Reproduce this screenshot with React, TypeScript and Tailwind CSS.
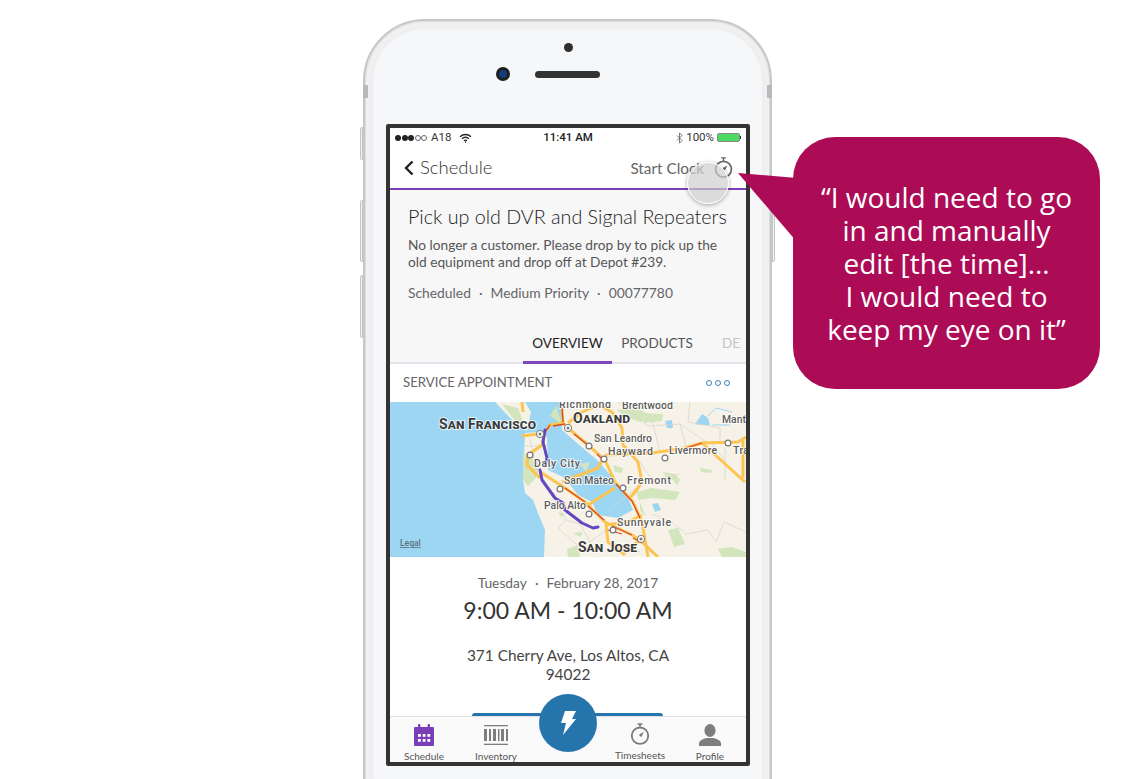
const Stopwatch = ({ className, needle = "#7a7a7a" }: { className?: string; needle?: string }) => (
  <svg viewBox="0 0 24 28" className={className} fill="none" stroke={needle}>
    <path d="M9 1.2h6M12 1.2v4" strokeWidth="1.8" />
    <circle cx="12" cy="15.5" r="10" strokeWidth="2.2" />
    <path d="M16.8 10.8l-3.2 6.600-3-3z" fill={needle} stroke="none" />
  </svg>
)

function StatusBar() {
  return (
    <div className="h-[19px] grid grid-cols-[1fr_auto_1fr] items-center px-[5px] text-[11.5px] text-[#333] font-['Roboto',sans-serif]">
      <div className="flex items-center">
        <span className="w-[6px] h-[6px] rounded-full bg-[#222] mr-[0.5px]" />
        <span className="w-[6px] h-[6px] rounded-full bg-[#222] mr-[0.5px]" />
        <span className="w-[6px] h-[6px] rounded-full bg-[#222] mr-[0.5px]" />
        <span className="w-[6px] h-[6px] rounded-full border border-[#666] mr-[0.5px]" />
        <span className="w-[6px] h-[6px] rounded-full border border-[#666] mr-[4px]" />
        <span>A18</span>
        <svg viewBox="0 0 14 11" className="w-[13px] h-[10px] ml-[8px]" fill="none" stroke="#222" strokeWidth="1.5">
          <path d="M1 4a9 9 0 0 1 12 0M3.200 6.300a6 6 0 0 1 7.600 0M5.300 8.400a3 3 0 0 1 3.400 0" />
          <circle cx="7" cy="10" r=".8" fill="#222" stroke="none" />
        </svg>
      </div>
      <span className="font-medium text-[#222]">11:41 AM</span>
      <div className="flex items-center justify-end">
        <svg viewBox="0 0 8 14" className="w-[7px] h-[12px] mr-[3px]" fill="none" stroke="#666" strokeWidth="1">
          <path d="M1 4l6 6-3 3V1l3 3-6 6" />
        </svg>
        <span>100%</span>
        <span className="ml-[3px] w-[23px] h-[9px] bg-[#4cd964] border border-[#888] rounded-[2px]" />
        <span className="w-px h-[3px] bg-[#333]" />
      </div>
    </div>
  )
}

const MAP_LABELS: [string, number, number, number][] = [
  ["Richmond", 169, 6, 52],
  ["Brentwood", 232, 7, 51],
  ["Mant", 332, 21, 24],
  ["San Leandro", 204, 40, 58],
  ["Hayward", 218, 53, 45],
  ["Livermore", 279, 52, 48],
  ["Tra", 343, 52, 16],
  ["Daly City", 144, 65, 46],
  ["San Mateo", 174, 82, 50],
  ["Fremont", 237, 82, 44],
  ["Palo Alto", 154, 107, 42],
  ["Sunnyvale", 227, 124, 54],
]

const CITY_LABELS: [string, number, number, number][] = [
  ["San Francisco", 49, 27, 97],
  ["Oakland", 183, 21, 57],
  ["San Jose", 188, 150, 59],
]

function MapView() {
  const minor = [
    "M135 44H157M140 36L146 66M133 68L150 58M160 90L176 118L190 122L205 150M176 118L168 126L195 150",
    "M228 0L258 24L290 22L316 40M290 22L296 45M262 18L270 50M300 0L298 20L330 26M330 26V40",
    "M262 112L282 120L296 132L318 128L326 140L334 120L356 130M220 108L248 84M216 128L200 140M225 142L250 150",
    "M335 46V78M322 42L336 60M250 60L262 78L290 72",
  ]
  const roads = [
    "M132 0L133 10M155 30L160 23L173 21L178 26L198 43L215 58L225 80L243 100L252 120L258 155",
    "M172 5L173 21M178 21L192 10L208 3M208 3L222 10L232 26L233 43L248 60L252 80L244 92",
    "M215 53L262 51L295 46L312 41L348 40L356 35M312 41L355 80M353 36V76",
    "M172 80L208 66L212 58M198 103L225 86M240 96L248 86",
    "M150 70L155 73L175 86L195 100L215 120L242 133L252 140L268 155",
    "M138 53L137 63L150 76M138 53L152 43L155 30M132 34L148 32",
    "M215 123L238 120L252 113M216 122L218 140L235 153M250 138L235 150",
  ]
  const reds = [
    "M155 30L160 23M172 6L173 20M163 24L175 22M184 32L198 43M207 52L215 60M226 82L242 99L250 116",
    "M175 86L195 100M198 104L214 118M222 124L242 133M296 46L312 41M218 128L232 132M243 136L252 141",
  ]
  return (
    <svg viewBox="0 0 356 155" className="w-[356px] h-[155px] block shrink-0">
      <rect width="356" height="155" fill="#f6f2e8" />
      <path d="M0 0H172L172 28L187 41L207 58L225 78L238 96L243 108L228 116L208 113L202 100L188 93L175 76L158 68L157 35L150 30L135 31L133 78L135 91L143 98L148 111L155 128L154 155H0Z" fill="#9dd6f2" />
      <path d="M105 0H135L141 10L137 29L128 24Z" fill="#f6f2e8" />
      <path d="M112 2L128 6L135 25L126 20Z M226 8L246 5L260 14L250 20L238 16Z" fill="#d3e5bd" />
      <path d="M133 50L150 62L146 76L138 84L133 78Z M160 14L172 22L166 4Z M223 63L233 66L232 71L225 70Z M247 11L273 12L272 19L255 21Z M310 66L322 68L321 71L311 70Z M273 70L285 72L290 78H278Z M247 90L262 86L290 90L285 98L262 96L248 98Z M283 78H290L287 83Z M278 128L288 126L295 142L284 145Z M328 147L342 145L356 150V155H332Z M168 110L175 112L171 115Z M183 131L193 130L190 135Z M177 147L188 143L190 155H178Z M250 100L256 115L250 108Z M190 62L200 60L196 70Z" fill="#d3e5bd" />
      <path d="M275 19L282 18L283 26L277 26Z M305 22L312 12L318 16L320 23H310Z M262 102L268 101L271 108L265 110Z" fill="#9dd6f2" />
      <path d="M318 14L326 6L342 10M322 23H340" fill="none" stroke="#9dd6f2" strokeWidth="1" />
      <g fill="none" stroke="#d9d5c9" strokeWidth=".8">
        {minor.map((d) => <path key={d} d={d} />)}
      </g>
      <g fill="none" stroke="#fcc551" strokeWidth="3" strokeLinejoin="round">
        {roads.map((d) => <path key={d} d={d} />)}
      </g>
      <g fill="none" stroke="#d9472b" strokeWidth="1.300">
        {reds.map((d) => <path key={d} d={d} />)}
      </g>
      <path d="M155 28L153 40L157 56L155 64M150 68L152 78L165 96L173 101L175 108L192 121L203 126L208 125" fill="none" stroke="#6248c0" strokeWidth="3" strokeLinecap="round" strokeLinejoin="round" />
      <g fill="#fff" stroke="#777" strokeWidth="1.200">
        {[[140, 53], [199, 44], [214, 57], [275, 56], [338, 41], [170, 87], [233, 86], [199, 112], [223, 128]].map(([x, y]) => (
          <circle key={`${x}-${y}`} cx={x} cy={y} r="2.900" />
        ))}
      </g>
      <g fill="#fff" stroke="#777" strokeWidth="1">
        {[[150, 32], [178, 26], [251, 137]].map(([x, y]) => (
          <g key={x}>
            <circle cx={x} cy={y} r="3.600" />
            <circle cx={x} cy={y} r="1.500" fill="#777" stroke="none" />
          </g>
        ))}
      </g>
      <g fontFamily="Roboto, sans-serif" stroke="#fff" strokeOpacity=".75" strokeWidth="2" paintOrder="stroke" fill="#5c5c5c" fontSize="10.5" fontWeight="500">
        {MAP_LABELS.map(([t, x, y, w]) => (
          <text key={t} x={x} y={y} textLength={w}>{t}</text>
        ))}
        {CITY_LABELS.map(([t, x, y, w]) => (
          <text key={t} x={x} y={y} textLength={w} fontWeight="700" fontSize="14" fontVariant="small-caps" fill="#3c3c3c">{t}</text>
        ))}
      </g>
      <text x="10" y="144" fontFamily="Roboto, sans-serif" fontSize="8.500" fontWeight="500" fill="#5a7480" textDecoration="underline">Legal</text>
    </svg>
  )
}

function TabBar() {
  return (
    <div className="h-[46px] shrink-0 bg-[#fafafa] border-t border-[#e2e2e4] flex relative text-[10px] leading-[12px] text-[#555] font-['Lato',sans-serif]">
      <div className="w-[68px] flex flex-col items-center pt-[7px]">
        <svg viewBox="0 0 20 22" className="w-[20px] h-[22px]">
          <path d="M1 3h18a1 1 0 0 1 1 1v17a1 1 0 0 1-1 1H1a1 1 0 0 1-1-1V4a1 1 0 0 1 1-1z" fill="#7a3fb8" />
          <rect x="4" y="0" width="2.400" height="5" rx="1" fill="#7a3fb8" />
          <rect x="13.600" y="0" width="2.400" height="5" rx="1" fill="#7a3fb8" />
          <g fill="#fff">
            {[4, 8.700, 13.400].flatMap((x) => [10, 15].map((y) => <rect key={`${x}${y}`} x={x} y={y} width="2.800" height="2.800" />))}
          </g>
        </svg>
        <span className="mt-[4px]">Schedule</span>
      </div>
      <div className="w-[76px] flex flex-col items-center pt-[8px]">
        <svg viewBox="0 0 24 20" className="w-[24px] h-[20px]" fill="#7d7d7d">
          <rect width="24" height="1.300" />
          <rect y="18.700" width="24" height="1.300" />
          <rect x="0" y="4" width="3" height="12" />
          <rect x="5" y="4" width="2" height="12" />
          <rect x="9" y="4" width="3" height="12" />
          <rect x="14" y="4" width="1.500" height="12" />
          <rect x="17" y="4" width="3" height="12" />
          <rect x="22" y="4" width="2" height="12" />
        </svg>
        <span className="mt-[5px]">Inventory</span>
      </div>
      <div className="w-[68px]" />
      <div className="w-[76px] flex flex-col items-center pt-[6px]">
        <Stopwatch className="w-[20px] h-[23px]" />
        <span className="mt-[3px]">Timesheets</span>
      </div>
      <div className="w-[64px] flex flex-col items-center pt-[7px]">
        <svg viewBox="0 0 22 22" className="w-[22px] h-[22px]" fill="#7d7d7d">
          <ellipse cx="11" cy="6.500" rx="5.600" ry="6.500" />
          <path d="M0 22v-2.500c0-3 4-4.500 7.500-5.500h7c3.500 1 7.500 2.500 7.500 5.500V22z" />
        </svg>
        <span className="mt-[4px]">Profile</span>
      </div>
      <div className="absolute left-[149px] top-[-23px] w-[58px] h-[58px] rounded-full bg-[#2574ab] flex items-center justify-center">
        <svg viewBox="0 0 16 24" className="w-[16px] h-[24px]" fill="#fff">
          <path d="M5 0h11l-4 8h4L3 24l3-12H1z" />
        </svg>
      </div>
    </div>
  )
}

function Screen() {
  return (
    <div className="w-[364px] h-[642px] ml-[21px] border-4 border-[#333] rounded-[2px] bg-white flex flex-col overflow-hidden">
      <div className="bg-white shrink-0"><StatusBar /></div>
      <div className="h-[43px] shrink-0 bg-white border-b-2 border-[#7b3fb5] flex items-center justify-between pl-[14px] pr-[13px] font-['Lato',sans-serif] text-[#4a4a4a]">
        <div className="flex items-center">
          <svg viewBox="0 0 10 16" className="w-[10px] h-[16px]" fill="none" stroke="#222" strokeWidth="2.400">
            <path d="M8.500 1.500L2 8l6.500 6.500" />
          </svg>
          <span className="text-[18.5px] ml-[6px] pt-px font-light text-[#333]">Schedule</span>
        </div>
        <div className="flex items-center text-[15.3px] text-[#666]">
          <span className="pt-[2px]">Start Clock</span>
          <Stopwatch className="w-[19px] h-[24px] ml-[10px] mt-[1px]" needle="#666" />
        </div>
      </div>
      <div className="h-[174px] shrink-0 bg-[#f7f7f8] border-b-2 border-[#e4e2ea] flex flex-col font-['Lato',sans-serif]">
        <h1 className="text-[19.7px] leading-[24px] font-light text-[#222] pl-[18px] pt-[15px] whitespace-nowrap">Pick up old DVR and Signal Repeaters</h1>
        <p className="text-[13.700px] leading-[17px] text-[#555] pl-[18px] pt-[7px]">No longer a customer. Please drop by to pick up the<br />old equipment and drop off at Depot #239.</p>
        <div className="text-[13.850px] text-[#666] pl-[18px] pt-[14px] leading-[17px] flex gap-[8px]">
          <span>Scheduled</span><span>·</span><span>Medium Priority</span><span>·</span><span>00077780</span>
        </div>
        <div className="mt-auto flex pl-[133px] text-[13.500px] leading-[17px]">
          <div className="w-[89px] h-[37px] pt-[8px] text-center text-[#222] border-b-[3px] border-[#7e48bd] -mb-[2px]">OVERVIEW</div>
          <div className="w-[90px] pt-[8px] text-center text-[#555]">PRODUCTS</div>
          <div className="pt-[8px] ml-[20px] text-[#c4c4c4] w-[19px] overflow-hidden whitespace-nowrap">DETAILS</div>
        </div>
      </div>
      <div className="h-[38px] shrink-0 bg-white flex items-center justify-between pl-[13px] pr-[16px] text-[13.200px] text-[#666] font-['Lato',sans-serif]">
        <span>SERVICE APPOINTMENT</span>
        <div className="flex gap-[3px]">
          <span className="w-[6px] h-[6px] rounded-full border border-[#3f83b5]" />
          <span className="w-[6px] h-[6px] rounded-full border border-[#3f83b5]" />
          <span className="w-[6px] h-[6px] rounded-full border border-[#3f83b5]" />
        </div>
      </div>
      <MapView />
      <div className="flex-1 min-h-0 bg-white flex flex-col items-center font-['Lato',sans-serif] relative overflow-hidden">
        <div className="flex gap-[8px] text-[13.800px] leading-[17px] text-[#666] pt-[17px]">
          <span>Tuesday</span><span>·</span><span>February 28, 2017</span>
        </div>
        <div className="text-[23px] leading-[30px] text-[#333] mt-[4px]">9:00 AM - 10:00 AM</div>
        <div className="text-[15.400px] leading-[19px] text-[#444] text-center mt-[21px]">371 Cherry Ave, Los Altos, CA<br />94022</div>
        <div className="absolute left-[82px] bottom-0 w-[191px] h-[3px] rounded-t-[8px] bg-[#2574ab]" />
      </div>
      <TabBar />
    </div>
  )
}

export default function App() {
  return (
    <div className="w-[1136px] h-[779px] bg-white relative overflow-hidden">
      <div className="pt-[19px] pl-[363px]">
        <div className="w-[409px] h-[820px] rounded-[62px] bg-[#f6f7f9] border-2 border-[#c6c7c9] shadow-[inset_0_0_0_1px_#dcdddf,inset_0_0_0_6px_#f0f0f1,inset_0_0_3px_7px_#e6e7e9] relative">
          <div className="h-[103px] relative">
            <span className="absolute left-[199px] top-[22px] w-[9px] h-[9px] rounded-full bg-[#2e2e2e]" />
            <span className="absolute left-[131px] top-[46px] w-[14px] h-[14px] rounded-full bg-[#123c7a] border-[3px] border-[#1e1e1e]" />
            <span className="absolute left-[170px] top-[50px] w-[65px] h-[7px] rounded-full bg-[#333]" />
          </div>
          <Screen />
        </div>
      </div>
      <span className="absolute left-[360px] top-[127px] w-[3px] h-[33px] rounded-l-[2px] bg-[#f2f2f2] border border-[#c4c4c4]" />
      <span className="absolute left-[360px] top-[200px] w-[3px] h-[62px] rounded-l-[2px] bg-[#f2f2f2] border border-[#c4c4c4]" />
      <span className="absolute left-[360px] top-[275px] w-[3px] h-[63px] rounded-l-[2px] bg-[#f2f2f2] border border-[#c4c4c4]" />
      <span className="absolute left-[772px] top-[200px] w-[3px] h-[62px] rounded-r-[2px] bg-[#f2f2f2] border border-[#c4c4c4]" />
      <span className="absolute left-[363px] top-[85px] w-[5px] h-[13px] bg-[#b8b9bb]" />
      <span className="absolute left-[767px] top-[85px] w-[5px] h-[13px] bg-[#b8b9bb]" />
      <div className="absolute left-[687px] top-[162px] w-[42px] h-[42px] rounded-full bg-[#cfcfcf]/70 border border-white shadow-[0_1px_4px_rgba(0,0,0,0.35)]" />
      <svg viewBox="0 0 60 72" className="absolute left-[737px] top-[172px] w-[60px] h-[72px]">
        <path d="M1 1L60 6V70Z" fill="#ac0b56" />
      </svg>
      <div className="absolute left-[793px] top-[137px] w-[307px] h-[252px] rounded-[42px] bg-[#ac0b56] flex items-center justify-center text-center text-white text-[28px] leading-[33px] font-['Open_Sans',sans-serif]">
        <p>“I would need to go<br />in and manually<br />edit [the time]…<br />I would need to<br />keep my eye on it”</p>
      </div>
    </div>
  )
}
